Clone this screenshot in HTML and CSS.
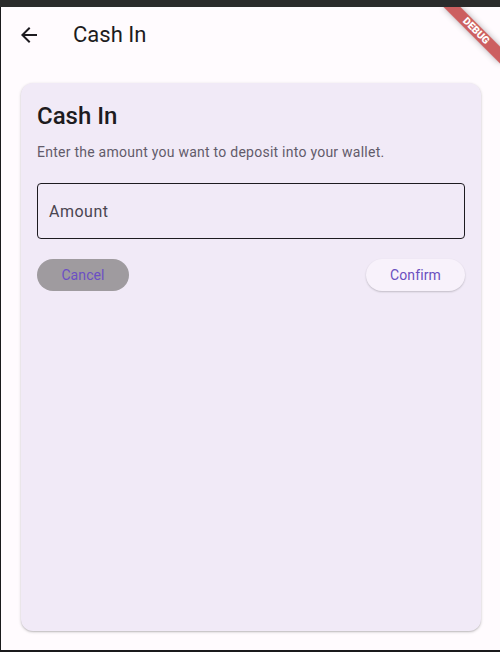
FILE: index.html
```html
<!DOCTYPE html>
<html>
<head>
<meta charset="utf-8">
<link rel="stylesheet" href="styles.css">
</head>
<body>
<div class="top-strip"></div>
<div class="frame">
  <header class="appbar">
    <button class="back" aria-label="Back">
      <svg width="24" height="24" viewBox="0 0 24 24"><path d="M20 11H7.83l5.59-5.59L12 4l-8 8 8 8 1.41-1.41L7.83 13H20v-2z" fill="#1d1b20"/></svg>
    </button>
    <h1 class="title">Cash In</h1>
  </header>
  <main class="content">
    <section class="card">
      <h2 class="card-title">Cash In</h2>
      <p class="card-sub">Enter the amount you want to deposit into your wallet.</p>
      <div class="field"><span class="field-label">Amount</span></div>
      <div class="actions">
        <button class="btn btn-cancel">Cancel</button>
        <button class="btn btn-confirm">Confirm</button>
      </div>
    </section>
  </main>
  <div class="debug-banner">DEBUG</div>
</div>
</body>
</html>
```

FILE: styles.css
```css
* { box-sizing: border-box; }
html, body { margin: 0; padding: 0; }
body {
  width: 500px;
  height: 652px;
  background: #1a1a1c;
  overflow: hidden;
  font-family: Roboto, "Noto Sans", sans-serif;
}
.top-strip {
  height: 7px;
  background: #2b2b2b;
}
.frame {
  position: relative;
  margin-left: 1px;
  width: 499px;
  height: 643px;
  background: #fffbfe;
  overflow: hidden;
  display: flex;
  flex-direction: column;
}
.appbar {
  height: 56px;
  display: flex;
  align-items: center;
  padding-left: 4px;
  flex-shrink: 0;
}
.back {
  width: 48px;
  height: 48px;
  border: none;
  background: transparent;
  padding: 0;
  display: flex;
  align-items: center;
  justify-content: center;
  margin-right: 20px;
}
.back svg { display: block; }
.title {
  margin: 0;
  font-size: 22px;
  line-height: 28px;
  font-weight: 400;
  color: #1d1b20;
}
.content {
  flex: 1;
  padding: 20px 19px 19px 20px;
  display: flex;
}
.card {
  flex: 1;
  background: #f1eaf7;
  border-radius: 12px;
  box-shadow: 0 1px 3px rgba(0,0,0,0.22), 0 1px 1px rgba(0,0,0,0.08);
  padding: 17px 16px 16px 16px;
}
.card-title {
  margin: 0;
  font-size: 24px;
  line-height: 32px;
  font-weight: 500;
  color: #1d1b20;
}
.card-sub {
  margin: 10px 0 0 0;
  font-size: 14px;
  line-height: 20px;
  letter-spacing: 0.25px;
  color: #625b6a;
}
.field {
  margin-top: 21px;
  height: 56px;
  border: 1px solid #1d1b20;
  border-radius: 4px;
  display: flex;
  align-items: center;
  padding-left: 11px;
}
.field-label {
  font-size: 16px;
  letter-spacing: 0.5px;
  color: #4a4550;
}
.actions {
  margin-top: 20px;
  display: flex;
  justify-content: space-between;
}
.btn {
  height: 32px;
  border: none;
  border-radius: 16px;
  font-family: Roboto, "Noto Sans", sans-serif;
  font-size: 14px;
  letter-spacing: 0.1px;
  color: #6a4fbf;
  padding: 0;
}
.btn-cancel {
  width: 92px;
  background: #9f9b9f;
  color: #6b4fc4;
}
.btn-confirm {
  width: 99px;
  background: #f8f2fb;
  box-shadow: 0 1px 2px rgba(0,0,0,0.2);
}
.debug-banner {
  position: absolute;
  left: 435px;
  top: 18px;
  width: 80px;
  height: 12px;
  transform: rotate(45deg);
  background: rgba(183, 28, 28, 0.7);
  box-shadow: 0 0 6px rgba(0,0,0,0.3);
  color: #fff;
  font-size: 10.2px;
  font-weight: 900;
  line-height: 12px;
  text-align: center;
}
```
